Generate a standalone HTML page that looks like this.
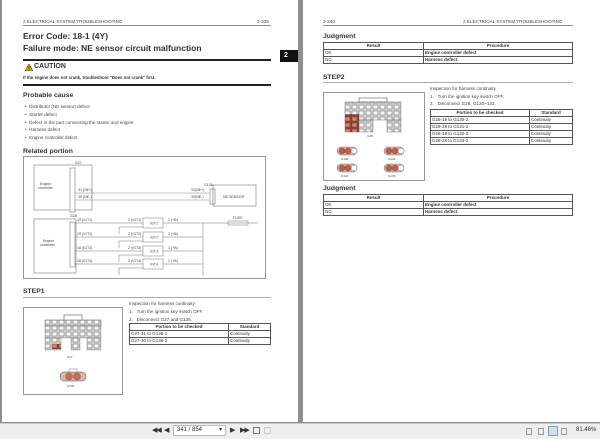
<!DOCTYPE html>
<html><head><meta charset="utf-8"><style>
*{margin:0;padding:0;box-sizing:border-box}
body{width:600px;height:439px;background:#8f8f8f;position:relative;overflow:hidden;font-family:"Liberation Sans",sans-serif;color:#222}
.pg{position:absolute;background:#fff;top:0;height:422px}
.a{position:absolute;white-space:nowrap}
.hl{position:absolute;height:1px;background:#555}
.s{font-size:4.6px;color:#444}
.h1{font-size:10px;font-weight:bold;color:#333}
.h2{font-size:6.8px;font-weight:bold;color:#333}
table{position:absolute;border-collapse:collapse;font-size:4.5px;color:#333}
td,th{border:0.8px solid #555;padding:0 1px;height:7px;line-height:6px;text-align:left}
th{text-align:center;font-weight:bold}
</style></head><body>
<svg width="0" height="0" style="position:absolute"><defs>
<pattern id="cell" width="7" height="6" patternUnits="userSpaceOnUse"><rect width="7" height="6" fill="#d8d8d8"/><rect x="1" y="1" width="5" height="4" fill="#f4f4f4" stroke="#444" stroke-width=".4"/></pattern>
<pattern id="cellr" width="7" height="6" patternUnits="userSpaceOnUse"><rect width="7" height="6" fill="#9a3f30"/><rect x="1" y="1" width="5" height="4" fill="#d9806c" stroke="#444" stroke-width=".4"/></pattern>
</defs></svg>
<div class="pg" style="left:2px;width:296px"></div>
<div class="pg" style="left:303px;width:297px"></div>

<!-- LEFT PAGE -->
<div class="a s" style="left:23px;top:19px">2 ELECTRICAL SYSTEM TROUBLESHOOTING</div>
<div class="a s" style="left:257px;top:19px">2-339</div>
<div class="hl" style="left:23px;top:25px;width:248px;background:#888"></div>
<div class="a h1" style="left:23px;top:31px;font-size:8.5px">Error Code: 18-1 (4Y)</div>
<div class="a h1" style="left:23px;top:43px;font-size:8.5px">Failure mode: NE sensor circuit malfunction</div>
<div class="hl" style="left:23px;top:59px;width:248px;height:1.5px;background:#222"></div>
<div style="position:absolute;left:280px;top:50px;width:18px;height:12px;background:#111;color:#fff;font-size:7px;font-weight:bold;padding:2px 0 0 4px">2</div>
<svg class="a" style="left:25px;top:64px" width="8" height="7"><polygon points="4,0 8,7 0,7" fill="#e0a800" stroke="#333" stroke-width=".6"/><text x="3.3" y="6.3" font-size="5" font-weight="bold" fill="#000">!</text></svg>
<div class="a h1" style="left:34px;top:63px;font-size:7px">CAUTION</div>
<div class="a s" style="left:23px;top:75px;font-weight:bold;color:#333;font-size:4.3px">If the engine does not crank, troubleshoot "Does not crank" first.</div>
<div class="hl" style="left:23px;top:84px;width:248px;height:1.5px;background:#222"></div>
<div class="a h2" style="left:23px;top:92px">Probable cause</div>
<div class="a s" style="left:25px;top:103px;line-height:7.8px">• &nbsp;Distributor (NE sensor) defect<br>• &nbsp;Starter defect<br>• &nbsp;Defect in the part connecting the starter and engine<br>• &nbsp;Harness defect<br>• &nbsp;Engine controller defect</div>
<div class="a h2" style="left:23px;top:148px">Related portion</div>
<svg class="a" style="left:23px;top:156px" width="243" height="123" font-family="Liberation Sans" font-size="3.6" fill="#444">
<rect x=".5" y=".5" width="242" height="122" fill="#fff" stroke="#999"/>
<rect x="11" y="9" width="58" height="45" fill="none" stroke="#777" stroke-width=".6"/>
<rect x="47" y="12" width="5" height="44" fill="#fff" stroke="#777" stroke-width=".6"/>
<text x="52" y="8">G27</text><text x="17" y="29">Engine</text><text x="15" y="33">controller</text>
<line x1="52" y1="37" x2="186" y2="37" stroke="#888" stroke-width=".5"/>
<line x1="52" y1="44" x2="186" y2="44" stroke="#888" stroke-width=".5"/>
<text x="55" y="35">31 (NE+)</text><text x="55" y="42">30 (NE-)</text>
<text x="168" y="35">31(NE+)</text><text x="168" y="42">30(NE-)</text><text x="181" y="30">G136</text>
<rect x="187" y="33" width="5" height="15" fill="#fff" stroke="#777" stroke-width=".6"/>
<rect x="190" y="29" width="43" height="21" fill="none" stroke="#777" stroke-width=".6"/>
<text x="200" y="42">NE SENSOR</text>
<rect x="11" y="63" width="42" height="54" fill="none" stroke="#777" stroke-width=".6"/>
<rect x="47" y="66" width="5" height="45" fill="#fff" stroke="#777" stroke-width=".6"/>
<text x="47" y="61">G28</text><text x="20" y="86">Engine</text><text x="17" y="90">controller</text>
<g stroke="#777" stroke-width=".5" fill="none">
<line x1="52" y1="67" x2="120" y2="67"/><line x1="52" y1="81" x2="120" y2="81"/><line x1="52" y1="95" x2="120" y2="95"/><line x1="52" y1="108" x2="120" y2="108"/>
<rect x="120" y="62" width="20" height="10"/><rect x="120" y="76" width="20" height="10"/><rect x="120" y="90" width="20" height="10"/><rect x="120" y="103" width="20" height="10"/>
<line x1="140" y1="67" x2="180" y2="67"/><line x1="140" y1="81" x2="180" y2="81"/><line x1="140" y1="95" x2="180" y2="95"/><line x1="140" y1="108" x2="180" y2="108"/>
<line x1="180" y1="67" x2="180" y2="120"/><line x1="180" y1="67" x2="235" y2="67"/>
<rect x="205" y="65" width="20" height="4"/>
<line x1="96" y1="71" x2="96" y2="78"/><line x1="96" y1="85" x2="96" y2="92"/><line x1="96" y1="99" x2="96" y2="106"/><line x1="96" y1="112" x2="96" y2="119"/>
<line x1="96" y1="71" x2="120" y2="71"/><line x1="96" y1="85" x2="120" y2="85"/><line x1="96" y1="99" x2="120" y2="99"/><line x1="96" y1="112" x2="120" y2="112"/>
</g>
<text x="54" y="65">19 (IGT1)</text><text x="54" y="79">29 (IGT2)</text><text x="54" y="93">18 (IGT3)</text><text x="54" y="106">28 (IGT4)</text>
<text x="127" y="68.5">IGT1</text><text x="127" y="82.5">IGT2</text><text x="127" y="96.5">IGT3</text><text x="127" y="109.5">IGT4</text>
<text x="105" y="65">2 (IGT1)</text><text x="105" y="79">2 (IGT2)</text><text x="105" y="93">2 (IGT3)</text><text x="105" y="106">2 (IGT4)</text>
<text x="145" y="65">1 (+B)</text><text x="145" y="79">1 (+B)</text><text x="145" y="93">1 (+B)</text><text x="145" y="106">1 (+B)</text>
<text x="210" y="63">FUSE</text>
</svg>
<div class="a h2" style="left:23px;top:288px">STEP1</div>
<div class="hl" style="left:23px;top:297px;width:248px;background:#aaa"></div>
<div class="a s" style="left:129px;top:300px;line-height:8px">Inspection for harness continuity<br>1. &nbsp; Turn the ignition key switch OFF.<br>2. &nbsp; Disconnect G27 and G136.</div>
<table style="left:129px;top:323px;width:142px"><tr><th style="width:99px">Portion to be checked</th><th>Standard</th></tr><tr><td>G27-31 to G136-1</td><td>Continuity</td></tr><tr><td>G27-30 to G136-2</td><td>Continuity</td></tr></table>
<svg class="a" style="left:23px;top:307px" width="100" height="88" font-family="Liberation Sans" font-size="3" fill="#444">
<rect x=".5" y=".5" width="99" height="87" fill="#fff" stroke="#999"/>
<rect x="41" y="8" width="18" height="6" fill="#fff" stroke="#555" stroke-width=".6"/>
<rect x="22" y="13" width="56" height="6" fill="url(#cell)" stroke="#555" stroke-width=".5"/>
<g stroke="#555" stroke-width=".3">
<rect x="22" y="19" width="56" height="12" fill="url(#cell)"/>
<rect x="22" y="31" width="16" height="12" fill="url(#cell)"/><rect x="48" y="31" width="9" height="12" fill="url(#cell)"/><rect x="64" y="31" width="14" height="12" fill="url(#cell)"/>
</g>
<rect x="29" y="37" width="9" height="5" fill="url(#cellr)"/>
<text x="44" y="51">G27</text>
<rect x="37" y="65" width="26" height="9" rx="4" fill="#d9b5a8" stroke="#555" stroke-width=".5"/>
<circle cx="46" cy="69.5" r="3.5" fill="#d06a55" stroke="#555" stroke-width=".4"/><circle cx="54" cy="69.5" r="3.5" fill="#d06a55" stroke="#555" stroke-width=".4"/>
<rect x="46" y="62" width="8" height="3" fill="#fff" stroke="#555" stroke-width=".4"/>
<text x="44" y="80">G136</text>
</svg>

<!-- RIGHT PAGE -->
<div class="a s" style="left:323px;top:19px">2-340</div>
<div class="a s" style="left:463px;top:19px">2 ELECTRICAL SYSTEM TROUBLESHOOTING</div>
<div class="hl" style="left:323px;top:25px;width:250px;background:#888"></div>
<div class="a h2" style="left:323px;top:33px">Judgment</div>
<table style="left:323px;top:42px;width:250px"><tr><th style="width:100px">Result</th><th>Procedure</th></tr><tr><td>OK</td><td style="font-weight:bold">Engine controller defect</td></tr><tr><td>NG</td><td style="font-weight:bold">Harness defect</td></tr></table>
<div class="a h2" style="left:323px;top:74px">STEP2</div>
<div class="hl" style="left:323px;top:82px;width:250px;background:#aaa"></div>
<svg class="a" style="left:323px;top:92px" width="102" height="89" font-family="Liberation Sans" font-size="3" fill="#444">
<rect x=".5" y=".5" width="101" height="88" fill="#fff" stroke="#999"/>
<rect x="36" y="6" width="28" height="4" fill="#fff" stroke="#555" stroke-width=".6"/>
<g stroke="#555" stroke-width=".4">
<rect x="22" y="10" width="56" height="18" fill="url(#cell)"/>
<rect x="22" y="28" width="28" height="12" fill="url(#cell)"/><rect x="64" y="28" width="14" height="12" fill="url(#cell)"/>
</g>
<rect x="22" y="22" width="14" height="18" fill="url(#cellr)"/>
<text x="44" y="45">G28</text>
<g stroke="#555" stroke-width=".4">
<rect x="14" y="55" width="20" height="8" rx="4" fill="#d9b5a8"/><circle cx="19" cy="59" r="3" fill="#c05c48"/><circle cx="25" cy="59" r="3" fill="#c05c48"/><circle cx="31" cy="59" r="3" fill="#fff"/>
<rect x="61" y="55" width="20" height="8" rx="4" fill="#d9b5a8"/><circle cx="66" cy="59" r="3" fill="#c05c48"/><circle cx="72" cy="59" r="3" fill="#c05c48"/><circle cx="78" cy="59" r="3" fill="#fff"/>
<rect x="14" y="72" width="20" height="8" rx="4" fill="#d9b5a8"/><circle cx="19" cy="76" r="3" fill="#c05c48"/><circle cx="25" cy="76" r="3" fill="#c05c48"/><circle cx="31" cy="76" r="3" fill="#fff"/>
<rect x="61" y="72" width="20" height="8" rx="4" fill="#d9b5a8"/><circle cx="66" cy="76" r="3" fill="#c05c48"/><circle cx="72" cy="76" r="3" fill="#c05c48"/><circle cx="78" cy="76" r="3" fill="#fff"/>
</g>
<text x="18" y="68">G130</text><text x="65" y="68">G132</text><text x="18" y="85">G131</text><text x="65" y="85">G133</text>
</svg>
<div class="a s" style="left:430px;top:85px;line-height:7.7px">Inspection for harness continuity<br>1. &nbsp; Turn the ignition key switch OFF.<br>2. &nbsp; Disconnect G28, G130~133.</div>
<table style="left:430px;top:109px;width:143px"><tr><th style="width:99px">Portion to be checked</th><th>Standard</th></tr><tr><td>G28-19 to G130-2</td><td>Continuity</td></tr><tr><td>G28-29 to G131-2</td><td>Continuity</td></tr><tr><td>G28-18 to G132-2</td><td>Continuity</td></tr><tr><td>G28-28 to G133-2</td><td>Continuity</td></tr></table>
<div class="a h2" style="left:323px;top:185px">Judgment</div>
<table style="left:323px;top:194px;width:250px"><tr><th style="width:100px">Result</th><th>Procedure</th></tr><tr><td>OK</td><td style="font-weight:bold">Engine controller defect</td></tr><tr><td>NG</td><td style="font-weight:bold">Harness defect</td></tr></table>

<!-- TOOLBAR -->
<div style="position:absolute;left:0;top:423px;width:600px;height:16px;background:#efefef;border-top:1px solid #ccc"></div>
<div class="a" style="left:152px;top:426px;font-size:7px;color:#333;letter-spacing:-1px">◀◀</div>
<div class="a" style="left:164px;top:426px;font-size:7px;color:#333">◀</div>
<div style="position:absolute;left:173px;top:425px;width:53px;height:11px;background:#fff;border:1px solid #bbb;font-size:6px;color:#333;padding:1px 0 0 3px">341 / 854<span style="position:absolute;right:3px;top:0">▾</span></div>
<div class="a" style="left:230px;top:426px;font-size:7px;color:#333">▶</div>
<div class="a" style="left:240px;top:426px;font-size:7px;color:#333;letter-spacing:-1px">▶▶</div>
<div style="position:absolute;left:253px;top:427px;width:7px;height:7px;border:1px solid #777"></div>
<div style="position:absolute;left:264px;top:427px;width:7px;height:7px;border:1px solid #ccc"></div>
<div style="position:absolute;left:526px;top:428px;width:6px;height:7px;border:1px solid #999"></div>
<div style="position:absolute;left:538px;top:428px;width:6px;height:7px;border:1px solid #999"></div>
<div style="position:absolute;left:548px;top:426px;width:10px;height:10px;background:#cfe0f3;border:1px solid #7a9cc6"></div>
<div style="position:absolute;left:561px;top:428px;width:6px;height:7px;border:1px solid #999"></div>
<div class="a" style="left:576px;top:427px;font-size:6px;color:#333">81.46%</div>
</body></html>
